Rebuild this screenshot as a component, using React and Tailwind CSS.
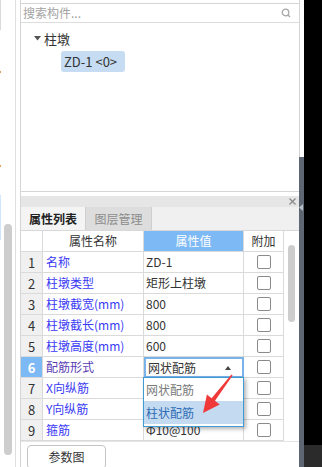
import React from 'react';

const rows = [
  { n: 1, name: '名称', val: 'ZD-1' },
  { n: 2, name: '柱墩类型', val: '矩形上柱墩' },
  { n: 3, name: '柱墩截宽(mm)', val: '800' },
  { n: 4, name: '柱墩截长(mm)', val: '800' },
  { n: 5, name: '柱墩高度(mm)', val: '600' },
  { n: 6, name: '配筋形式', val: '网状配筋', sel: true },
  { n: 7, name: 'X向纵筋', val: '' },
  { n: 8, name: 'Y向纵筋', val: '' },
  { n: 9, name: '箍筋', val: 'Φ10@100' },
];

function Checkbox() {
  return <div className="w-[14px] h-[14px] border border-[#8a8a8a] rounded-[2px] bg-white" />;
}

export default function App() {
  return (
    <div className="relative w-[322px] h-[467px] overflow-hidden flex bg-white font-['Noto_Sans_CJK_SC',sans-serif] text-[12px] text-[#333] leading-none">
      {/* left strip */}
      <div className="w-[16px] h-full border-r border-[#dedede] flex shrink-0">
        <div className="w-[1px] flex flex-col">
          <div className="h-[30px] bg-[#dadada]" />
          <div className="h-[41px]" />
          <div className="h-[2px] bg-[#e0a050]" />
          <div className="h-[92px]" />
          <div className="h-[2px] bg-[#e0a050]" />
          <div className="h-[28px]" />
          <div className="h-[45px] bg-[#cfe6ff]" />
        </div>
        <div className="ml-[3px] w-[8px] pt-[224px]">
          <div className="h-[231px] rounded-full bg-[#cdcdcd]" />
        </div>
      </div>
      <div className="w-[4px] shrink-0" />

      {/* main panel */}
      <div className="w-[279px] shrink-0 flex flex-col border-l border-[#d5d5d5]">
        <div className="h-[3px] shrink-0" />
        {/* tree box */}
        <div className="h-[189px] shrink-0 border-t border-b border-[#d5d5d5] flex flex-col">
          <div className="h-[19px] shrink-0 border-b border-[#dcdcdc] flex items-center justify-between pl-[2px] pr-[8px]">
            <span className="text-[#a3a3a3] text-[12px]">搜索构件...</span>
            <svg width="10" height="10" viewBox="0 0 10 10">
              <circle cx="4.5" cy="4.5" r="3.3" fill="none" stroke="#a8a8a8" strokeWidth="1.3" />
              <line x1="6.8" y1="6.8" x2="9" y2="9" stroke="#a8a8a8" strokeWidth="1.4" />
            </svg>
          </div>
          <div className="pt-[6px] flex flex-col">
            <div className="h-[18px] flex items-center pl-[13px]">
              <svg width="7" height="5" viewBox="0 0 7 5">
                <polygon points="0,0 7,0 3.5,4.5" fill="#555" />
              </svg>
              <span className="ml-[3px] text-[13px] text-[#333]">柱墩</span>
            </div>
            <div className="mt-[4px] ml-[40px] h-[21px] w-[64px] rounded-[3px] bg-[#c6dcf2] flex items-center pl-[3px] text-[13px] text-[#333]">
              ZD-1 &lt;0&gt;
            </div>
          </div>
        </div>
        <div className="h-[4px] shrink-0" />
        {/* grey bar */}
        <div className="h-[11px] shrink-0 bg-[#e6e6e6] flex items-center justify-end pr-[3px]">
          <svg width="7" height="7" viewBox="0 0 7 7">
            <line x1="0.5" y1="0.5" x2="6.5" y2="6.5" stroke="#8a8a8a" strokeWidth="1.2" />
            <line x1="6.5" y1="0.5" x2="0.5" y2="6.5" stroke="#8a8a8a" strokeWidth="1.2" />
          </svg>
        </div>
        {/* tabs */}
        <div className="h-[24px] shrink-0 bg-[#f0f0f0] flex border-b border-[#d8d8d8]">
          <div className="w-[65px] bg-[#f4f4f4] border-r border-[#cfcfcf] flex items-center justify-center font-bold text-[#222]">
            属性列表
          </div>
          <div className="w-[66px] bg-[#dddddd] border-r border-[#cfcfcf] flex items-center justify-center text-[#8c8c8c]">
            图层管理
          </div>
        </div>
        {/* table */}
        <div className="relative flex shrink-0">
          <div className="w-[263px] flex flex-col">
            <div className="h-[21px] flex">
              <div className="w-[22px] border-r border-b border-[#dadada] bg-white" />
              <div className="w-[101px] border-r border-b border-[#dadada] flex items-center justify-center text-[#333]">属性名称</div>
              <div className="w-[100px] border-r border-b border-[#dadada] bg-[#7db9f4] flex items-center justify-center text-white">属性值</div>
              <div className="w-[40px] border-r border-b border-[#dadada] flex items-center justify-center text-[#333]">附加</div>
            </div>
            {rows.map((r) => (
              <div key={r.n} className="h-[21px] flex">
                {r.sel ? (
                  <div className="w-[22px] border-r border-b border-[#dadada] bg-[#7db9f4] flex items-center justify-center text-white font-bold text-[13px]">
                    {r.n}
                  </div>
                ) : (
                  <div className="w-[22px] border-r border-b border-[#dadada] bg-[#f0f0f0] flex items-center justify-center text-[#333] text-[13px]">
                    {r.n}
                  </div>
                )}
                {r.sel ? (
                  <div className="w-[101px] border-r border-b border-[#dadada] flex items-center pl-[3px] text-[#5a3db5] whitespace-nowrap">{r.name}</div>
                ) : (
                  <div className="w-[101px] border-r border-b border-[#dadada] flex items-center pl-[3px] text-[#3a3af5] whitespace-nowrap">{r.name}</div>
                )}
                {r.sel ? (
                  <div className="w-[100px] border-2 border-[#79b3ea] flex items-center justify-between pl-[2px] pr-[11px] text-[#333]">
                    <span>{r.val}</span>
                    <svg width="6" height="4" viewBox="0 0 6 4">
                      <polygon points="3,0 6,4 0,4" fill="#444" />
                    </svg>
                  </div>
                ) : (
                  <div className="w-[100px] border-r border-b border-[#dadada] flex items-center pl-[2px] text-[#333] whitespace-nowrap">{r.val}</div>
                )}
                <div className="w-[40px] border-r border-b border-[#dadada] flex items-center justify-center">
                  <Checkbox />
                </div>
              </div>
            ))}
          </div>
          <div className="w-[15px] bg-white pt-[14px] pl-[4px]">
            <div className="w-[7px] h-[77px] rounded-full bg-[#cdcdcd]" />
          </div>
          {/* dropdown */}
          <div className="absolute left-[122px] top-[146px] w-[101px] h-[50px] border border-[#3f9bd6] bg-white shadow-[2px_2px_4px_rgba(0,0,0,0.3)] flex flex-col">
            <div className="h-[23px] flex items-center pl-[2px] text-[#7a7a7a]">网状配筋</div>
            <div className="h-[23px] flex items-center pl-[2px] bg-[#c3daf0] text-[#2f6db5]">柱状配筋</div>
          </div>
        </div>
        {/* bottom */}
        <div className="flex-1 border-t border-[#e4e4e4] pt-[3px] pl-[6px]">
          <div className="w-[79px] h-[24px] border border-[#c4c4c4] rounded-[4px] bg-white flex items-center justify-center text-[#333]">
            参数图
          </div>
        </div>
      </div>

      {/* right thin column */}
      <div className="w-[5px] shrink-0 flex flex-col">
        <div className="h-[157px] border-l border-[#d5d5d5] bg-white" />
        <div className="flex-1 bg-[#5d6672] pt-[47px]">
          <svg width="4" height="7" viewBox="0 0 4 7">
            <polygon points="0,3.5 4,0 4,7" fill="#b8bec6" />
          </svg>
        </div>
      </div>
      {/* black column */}
      <div className="w-[18px] shrink-0 flex flex-col">
        <div className="flex-1 bg-black" />
        <div className="h-[22px] bg-[#2b2b2b]" />
      </div>

      {/* red arrow annotation */}
      <svg className="absolute left-0 top-0 pointer-events-none" width="322" height="467" viewBox="0 0 322 467">
        <polygon
          points="232.6,375.4 215.0,400.8 219.7,404.4 203,413 206.9,394.6 211.6,398.2 231.4,374.6"
          fill="#f03a3a"
        />
      </svg>
    </div>
  );
}
